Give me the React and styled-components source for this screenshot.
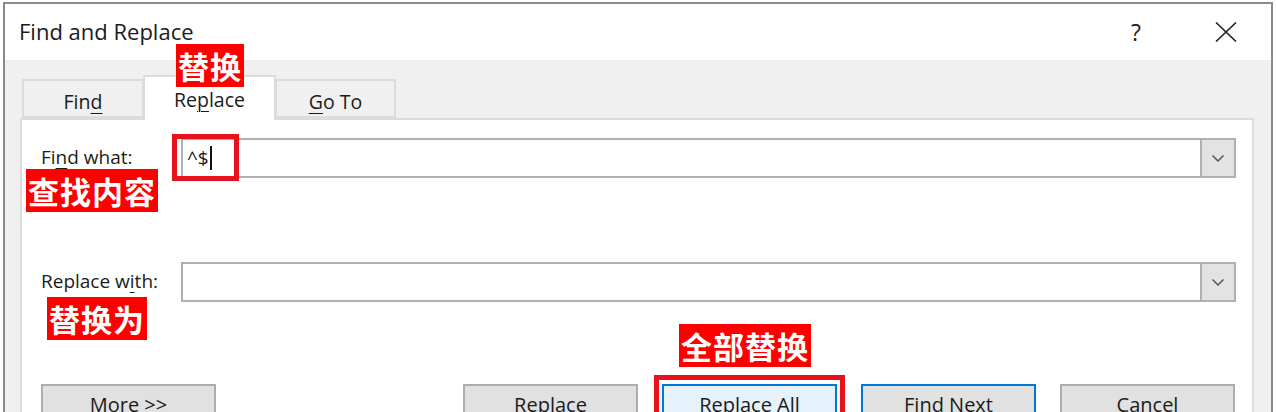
import React from 'react';
import styled, { createGlobalStyle } from 'styled-components';

const GlobalStyle = createGlobalStyle`
  html, body { margin: 0; padding: 0; background: #fff; overflow: hidden; }
  body { font-family: 'Open Sans', 'Noto Sans', sans-serif; color: #1b1b1b; }
`;

const Desk = styled.div`
  width: 1276px;
  height: 412px;
  box-sizing: border-box;
  padding: 2px 3px 0 3px;
  overflow: hidden;
  background: #fff;
`;

const Window = styled.div`
  height: 100%;
  box-sizing: border-box;
  border: 2px solid #8a8a8a;
  border-bottom: none;
  display: flex;
  flex-direction: column;
  background: #f0f0f0;
`;

const TitleBar = styled.div`
  height: 56px;
  flex: none;
  display: flex;
  align-items: center;
  padding-left: 14px;
  background: #fff;
`;

const Title = styled.div`
  flex: 1;
  font-size: 22px;
  color: #1a1a1a;
  padding-bottom: 2px;
`;

const TitleButton = styled.div`
  width: 90px;
  height: 100%;
  display: flex;
  align-items: center;
  justify-content: center;
  font-size: 23px;
  color: #222;
`;

const Body = styled.div`
  flex: 1;
  display: flex;
  flex-direction: column;
  padding: 15px 17px 0 15px;
`;

const TabStrip = styled.div`
  height: 43px;
  flex: none;
  display: flex;
  align-items: flex-end;
  padding-left: 2px;
`;

const Tab = styled.div`
  position: relative;
  box-sizing: border-box;
  width: ${({ $w }) => $w}px;
  height: ${({ $active }) => ($active ? 45 : 39)}px;
  margin-bottom: ${({ $active }) => ($active ? -2 : 0)}px;
  z-index: ${({ $active }) => ($active ? 2 : 1)};
  display: flex;
  justify-content: center;
  padding-top: ${({ $active }) => ($active ? 9 : 7)}px;
  background: ${({ $active }) => ($active ? '#fff' : '#f0f0f0')};
  border: 2px solid #dcdcdc;
  border-bottom: ${({ $active }) => ($active ? 'none' : '2px solid #dcdcdc')};
  margin-left: ${({ $active }) => ($active ? -1 : 0)}px;
  margin-right: ${({ $active }) => ($active ? -1 : 0)}px;
  font-size: 19.5px;
  color: #1b1b1b;
`;

const Key = styled.u`
  text-decoration-thickness: 1px;
  text-underline-offset: 4px;
`;

const Panel = styled.div`
  flex: 1;
  background: #fff;
  border: 2px solid #dcdcdc;
  border-bottom: none;
  padding: 18px 16px 0 19px;
  display: flex;
  flex-direction: column;
`;

const FieldRow = styled.div`
  display: grid;
  grid-template-columns: 140px 1fr;
  align-items: center;
  height: 40px;
  margin-top: ${({ $gap }) => $gap || 0}px;
`;

const LabelCell = styled.div`
  position: relative;
  font-size: 19px;
  color: #1b1b1b;
  padding-bottom: 2px;
`;

const Combo = styled.div`
  position: relative;
  height: 40px;
  box-sizing: border-box;
  display: flex;
  border: 2px solid #b0b0b0;
  background: #fff;
`;

const ComboText = styled.div`
  flex: 1;
  display: flex;
  align-items: center;
  padding-left: 4px;
  font-size: 19px;
  color: #1b1b1b;
`;

const Caret = styled.span`
  display: inline-block;
  width: 2px;
  height: 24px;
  margin-left: 1px;
  background: #111;
`;

const DropButton = styled.div`
  width: 32px;
  display: flex;
  align-items: center;
  justify-content: center;
  background: #e3e3e3;
  border-left: 2px solid #b0b0b0;
`;

const ButtonRow = styled.div`
  display: flex;
  gap: 24px;
  margin-top: 82px;
  padding-right: 1px;
`;

const Button = styled.div`
  position: relative;
  box-sizing: border-box;
  width: 175px;
  height: 40px;
  display: flex;
  justify-content: center;
  align-items: center;
  font-size: 20px;
  color: #1b1b1b;
  background: ${({ $kind }) => ($kind === 'focus' ? '#e5f1fb' : '#e1e1e1')};
  border: 2px solid ${({ $kind }) => ($kind ? '#0078d7' : '#adadad')};
  margin-right: ${({ $push }) => ($push ? 'auto' : '0')};
`;

const Tag = styled.div`
  position: absolute;
  left: ${({ $x }) => $x}px;
  top: ${({ $y }) => $y}px;
  z-index: 5;
  height: 43px;
  display: flex;
  align-items: center;
  white-space: nowrap;
  background: #ff0000;
  color: #fff;
  font-family: 'Noto Sans CJK SC', 'Noto Sans CJK JP', sans-serif;
  font-weight: 700;
  font-size: 31px;
  padding: 0 ${({ $pad }) => ($pad == null ? 3 : $pad)}px;
  letter-spacing: 1px;
`;

const Outline = styled.div`
  position: absolute;
  z-index: 4;
  left: ${({ $l }) => $l}px;
  top: ${({ $t }) => $t}px;
  width: ${({ $w }) => $w}px;
  height: ${({ $h }) => $h}px;
  box-sizing: border-box;
  border: 5px solid #e8121c;
  pointer-events: none;
`;

function Chevron() {
  return (
    <svg width="14" height="9" viewBox="0 0 14 9">
      <path d="M1.5 1.5 L7 7 L12.5 1.5" fill="none" stroke="#555" strokeWidth="1.5" />
    </svg>
  );
}

function CloseIcon() {
  return (
    <svg width="22" height="20" viewBox="0 0 22 20">
      <path d="M1 0.5 L21 19.5 M21 0.5 L1 19.5" stroke="#222" strokeWidth="1.6" />
    </svg>
  );
}

export default function App() {
  return (
    <Desk>
      <GlobalStyle />
      <Window>
        <TitleBar>
          <Title>Find and Replace</Title>
          <TitleButton>?</TitleButton>
          <TitleButton>
            <CloseIcon />
          </TitleButton>
        </TitleBar>
        <Body>
          <TabStrip>
            <Tab $w={122}>
              Fin<Key>d</Key>
            </Tab>
            <Tab $w={133} $active>
              Re<Key>p</Key>lace
              <Tag $x={31} $y={-33} $pad={2}>替换</Tag>
            </Tab>
            <Tab $w={121}>
              <Key>G</Key>o To
            </Tab>
          </TabStrip>
          <Panel>
            <FieldRow>
              <LabelCell>
                Fi<Key>n</Key>d what:
                <Tag $x={-15} $y={25} $pad={2}>查找内容</Tag>
              </LabelCell>
              <Combo>
                <Outline $l={-11} $t={-6} $w={67} $h={47} />
                <ComboText>
                  ^$<Caret />
                </ComboText>
                <DropButton>
                  <Chevron />
                </DropButton>
              </Combo>
            </FieldRow>
            <FieldRow $gap={84}>
              <LabelCell>
                Replace w<Key>i</Key>th:
                <Tag $x={6} $y={29} $pad={2}>替换为</Tag>
              </LabelCell>
              <Combo>
                <ComboText />
                <DropButton>
                  <Chevron />
                </DropButton>
              </Combo>
            </FieldRow>
            <ButtonRow>
              <Button $push>More &gt;&gt;</Button>
              <Button>Replace</Button>
              <Button $kind="focus">
                Replace All
                <Outline $l={-10} $t={-11} $w={191} $h={80} />
                <Tag $x={15} $y={-62} $pad={2}>全部替换</Tag>
              </Button>
              <Button $kind="default">Find Next</Button>
              <Button>Cancel</Button>
            </ButtonRow>
          </Panel>
        </Body>
      </Window>
    </Desk>
  );
}
